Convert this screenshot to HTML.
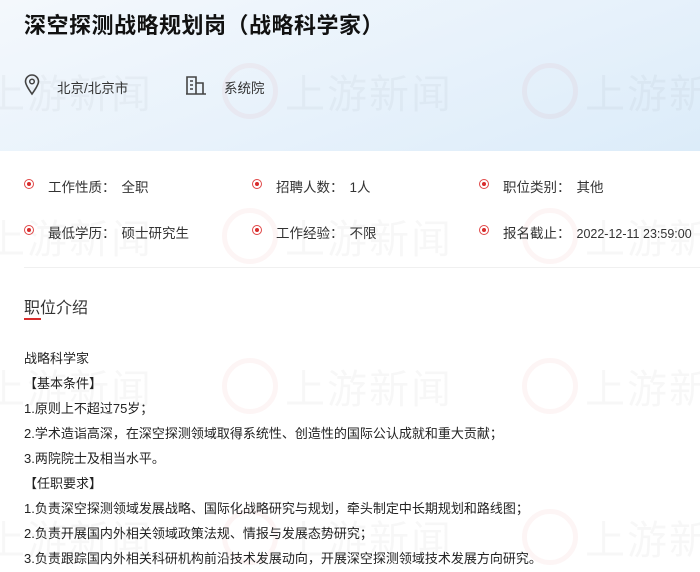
<!DOCTYPE html>
<html><head><meta charset="utf-8"><style>
body{margin:0;width:700px;height:572px;overflow:hidden;background:#fff;font-family:"Liberation Sans","Noto Sans CJK SC",sans-serif;color:#333;position:relative}
.hdr{position:absolute;left:0;top:0;width:700px;height:151px;background:linear-gradient(160deg,#f4f8fc 0%,#e6f1fb 60%,#dcecf9 100%)}
h1{position:absolute;left:24px;top:8px;margin:0;font-size:22px;font-weight:bold;color:#111;letter-spacing:0.5px}
.t{position:absolute;font-size:13.5px;color:#333;white-space:nowrap}
.t span{margin-left:6px}
.dot{position:absolute;width:8px;height:8px;border:1.5px solid #e04848;border-radius:50%}
.dot:after{content:"";position:absolute;left:2px;top:2px;width:4px;height:4px;background:#d72c2c;border-radius:50%}
.b{position:absolute;left:24px;font-size:13px;color:#222;white-space:nowrap}
.wm{position:absolute;font-size:40px;color:rgba(0,0,0,0.03);white-space:nowrap;letter-spacing:2px}
.wc{position:absolute;width:46px;height:46px;border:5px solid rgba(220,60,60,0.05);border-radius:50%}
</style></head><body>
<div class="hdr"></div>
<div class="wm" style="left:-15px;top:62px">上游新闻</div>
<div class="wc" style="left:222px;top:63px"></div><div class="wm" style="left:285px;top:62px">上游新闻</div>
<div class="wc" style="left:522px;top:63px"></div><div class="wm" style="left:585px;top:62px">上游新闻</div>
<div class="wm" style="left:-15px;top:207px">上游新闻</div>
<div class="wc" style="left:222px;top:208px"></div><div class="wm" style="left:285px;top:207px">上游新闻</div>
<div class="wc" style="left:522px;top:208px"></div><div class="wm" style="left:585px;top:207px">上游新闻</div>
<div class="wm" style="left:-15px;top:357px">上游新闻</div>
<div class="wc" style="left:222px;top:358px"></div><div class="wm" style="left:285px;top:357px">上游新闻</div>
<div class="wc" style="left:522px;top:358px"></div><div class="wm" style="left:585px;top:357px">上游新闻</div>
<div class="wm" style="left:-15px;top:508px">上游新闻</div>
<div class="wc" style="left:222px;top:509px"></div><div class="wm" style="left:285px;top:508px">上游新闻</div>
<div class="wc" style="left:522px;top:509px"></div><div class="wm" style="left:585px;top:508px">上游新闻</div>

<h1>深空探测战略规划岗（战略科学家）</h1>
<svg style="position:absolute;left:24px;top:74px" width="16" height="22" viewBox="0 0 16 22"><path d="M8 20C3 13 1.5 10 1.5 7.5a6.5 6.5 0 0 1 13 0C14.5 10 13 13 8 20z" fill="none" stroke="#444" stroke-width="1.6"/><circle cx="8" cy="7.5" r="2.3" fill="none" stroke="#444" stroke-width="1.5"/></svg>
<div class="t" style="left:57px;top:77px">北京/北京市</div>
<svg style="position:absolute;left:185px;top:75px" width="22" height="20" viewBox="0 0 22 20"><path d="M2 19V2h9v17M11 8h7v11M1 19h20M5 6h3M5 10h3M5 14h3" fill="none" stroke="#444" stroke-width="1.6"/></svg>
<div class="t" style="left:224px;top:77px">系统院</div>

<div class="dot" style="left:24px;top:179px"></div><div class="t" style="left:48px;top:176px">工作性质：<span>全职</span></div>
<div class="dot" style="left:252px;top:179px"></div><div class="t" style="left:276px;top:176px">招聘人数：<span>1人</span></div>
<div class="dot" style="left:479px;top:179px"></div><div class="t" style="left:503px;top:176px">职位类别：<span>其他</span></div>
<div class="dot" style="left:24px;top:225px"></div><div class="t" style="left:48px;top:222px">最低学历：<span>硕士研究生</span></div>
<div class="dot" style="left:252px;top:225px"></div><div class="t" style="left:276px;top:222px">工作经验：<span>不限</span></div>
<div class="dot" style="left:479px;top:225px"></div><div class="t" style="left:503px;top:222px">报名截止：<span style="font-size:12.5px">2022-12-11 23:59:00</span></div>
<div style="position:absolute;left:24px;top:267px;width:676px;height:1px;background:#f0f0f0"></div>
<div class="t" style="left:24px;top:294px;font-size:16px">职位介绍</div>
<div style="position:absolute;left:24px;top:318px;width:17px;height:2px;background:#d72c2c"></div>
<div class="b" style="top:348px">战略科学家</div>
<div class="b" style="top:373px">【基本条件】</div>
<div class="b" style="top:398px">1.原则上不超过75岁；</div>
<div class="b" style="top:423px">2.学术造诣高深，在深空探测领域取得系统性、创造性的国际公认成就和重大贡献；</div>
<div class="b" style="top:448px">3.两院院士及相当水平。</div>
<div class="b" style="top:473px">【任职要求】</div>
<div class="b" style="top:498px">1.负责深空探测领域发展战略、国际化战略研究与规划，牵头制定中长期规划和路线图；</div>
<div class="b" style="top:523px">2.负责开展国内外相关领域政策法规、情报与发展态势研究；</div>
<div class="b" style="top:548px">3.负责跟踪国内外相关科研机构前沿技术发展动向，开展深空探测领域技术发展方向研究。</div>
</body></html>
